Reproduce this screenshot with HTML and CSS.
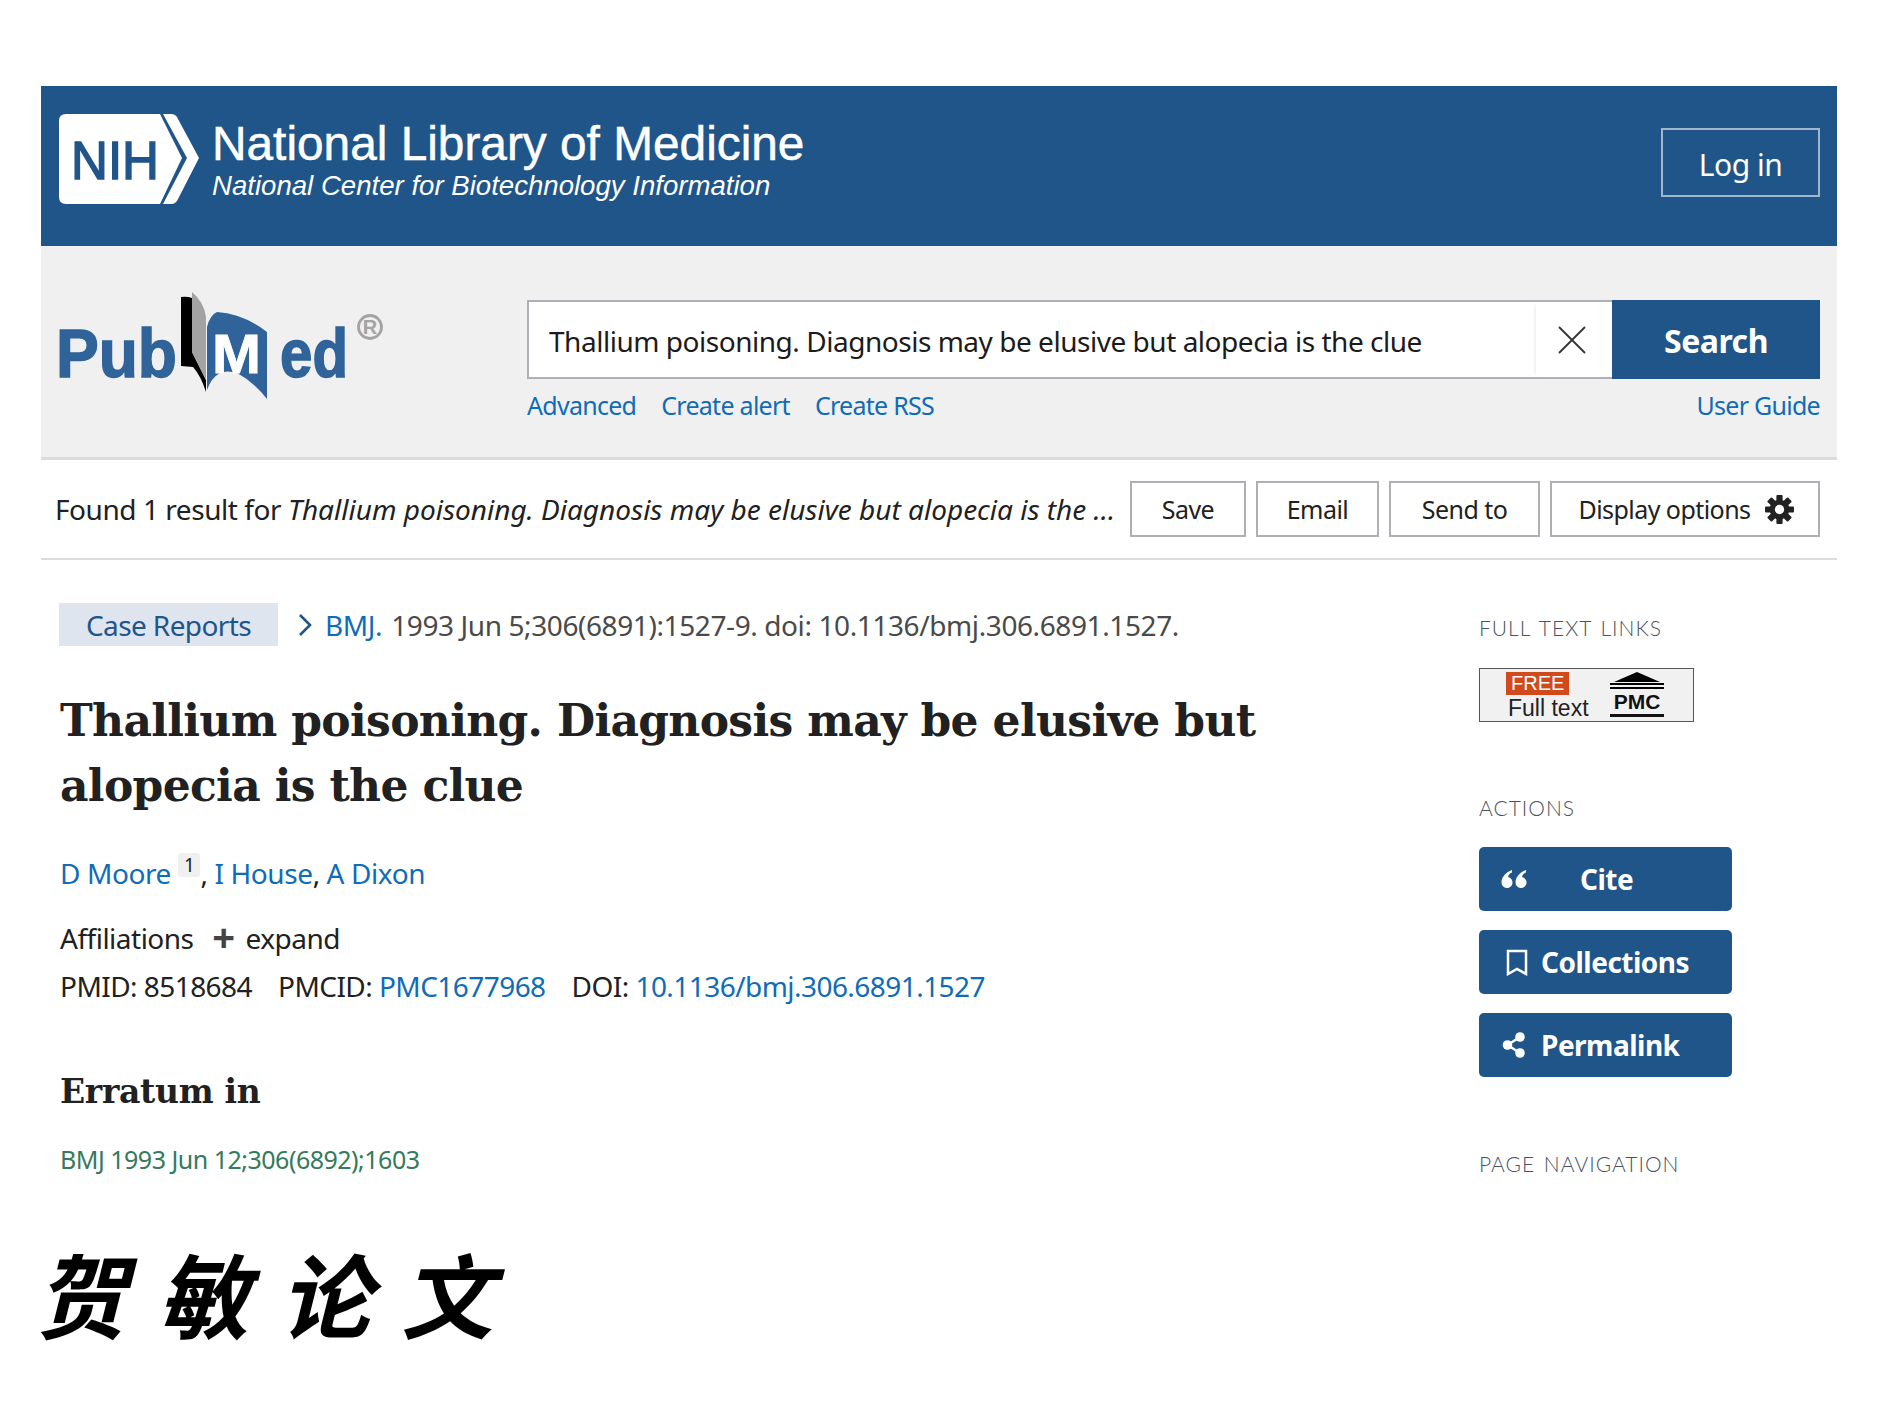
FILE: index.html
```html
<!DOCTYPE html>
<html lang="en">
<head>
  <meta charset="UTF-8" />
  <title>Thallium poisoning - PubMed</title>
  <link rel="stylesheet" href="styles.css">
</head>
<body>
  <div class="page">
    <header class="nih-bar">
      <div class="nih-brand">
        <svg class="nih-logo" width="140" height="90" viewBox="0 0 140 90">
          <path d="M7 0H101L123 44L101 90H7Q0 90 0 83V7Q0 0 7 0Z" fill="#fff"/>
          <path d="M104 0H112Q117 0 119 5L140 44L119 85Q117 90 112 90H104L128 44Z" fill="#fff"/>
          <text x="12" y="65" textLength="88" lengthAdjust="spacingAndGlyphs" class="nih-logo-text">NIH</text>
        </svg>
        <div class="nih-names">
          <div class="nih-title">National Library of Medicine</div>
          <div class="nih-sub">National Center for Biotechnology Information</div>
        </div>
      </div>
      <a class="login" href="#">Log in</a>
    </header>

    <section class="search-area">
      <svg class="pubmed-logo" width="330" height="112" viewBox="0 0 330 112">
        <path d="M148 37Q151 25 158 22Q185 24 208 42V109Q195 92 178 83Q168 80 161 83Q152 88 148 100Z" fill="#2f6399"/>
        <path d="M122 7Q128 6 133 8V62L147 90V102Q142 86 134 77L122 76Z" fill="#000"/>
        <path d="M133 2Q145 12 147 27V90L133 62Z" fill="#a3a3a3"/>
        <text x="-3" y="87" textLength="121" lengthAdjust="spacingAndGlyphs" class="pm-text">Pub</text>
        <text x="153" y="83" textLength="49" lengthAdjust="spacingAndGlyphs" class="pm-m">M</text>
        <text x="221" y="87" textLength="68" lengthAdjust="spacingAndGlyphs" class="pm-text">ed</text>
        <circle cx="311" cy="37" r="11.500" fill="none" stroke="#a3a3a3" stroke-width="2.800"/>
        <text x="311" y="44" class="pm-reg">R</text>
      </svg>
      <div class="search-col">
        <form class="search-form">
          <div class="search-input">
            <span class="search-text">Thallium poisoning. Diagnosis may be elusive but alopecia is the clue</span>
            <span class="clear-btn">
              <svg width="30" height="30" viewBox="0 0 30 30"><path d="M2 2L28 28M28 2L2 28" stroke="#333" stroke-width="1.800" fill="none"/></svg>
            </span>
          </div>
          <button class="search-btn" type="button">Search</button>
        </form>
        <div class="search-links">
          <a href="#">Advanced</a>
          <a href="#">Create alert</a>
          <a href="#">Create RSS</a>
          <a class="guide" href="#">User Guide</a>
        </div>
      </div>
    </section>

    <section class="results-bar">
      <div class="results-text">Found 1 result for <em>Thallium poisoning. Diagnosis may be elusive but alopecia is the ...</em></div>
      <div class="results-btns">
        <button class="bar-btn save" type="button">Save</button>
        <button class="bar-btn email" type="button">Email</button>
        <button class="bar-btn send" type="button">Send to</button>
        <button class="bar-btn display" type="button">Display options
          <svg width="29" height="29" viewBox="0 0 28 28">
            <g fill="#222">
              <rect x="11" y="0" width="6" height="28" rx="1"/>
              <rect x="11" y="0" width="6" height="28" rx="1" transform="rotate(45 14 14)"/>
              <rect x="11" y="0" width="6" height="28" rx="1" transform="rotate(90 14 14)"/>
              <rect x="11" y="0" width="6" height="28" rx="1" transform="rotate(135 14 14)"/>
              <circle cx="14" cy="14" r="9.500"/>
            </g>
            <circle cx="14" cy="14" r="4.500" fill="#fff"/>
          </svg>
        </button>
      </div>
    </section>

    <div class="content">
      <main class="article">
        <div class="meta-line">
          <span class="chip">Case Reports</span>
          <svg class="chev" width="16" height="24" viewBox="0 0 16 24"><path d="M3 2L13 12L3 22" fill="none" stroke="#20558a" stroke-width="2.600"/></svg>
          <a href="#">BMJ.</a>
          <span class="cit">1993 Jun 5;306(6891):1527-9. doi: 10.1136/bmj.306.6891.1527.</span>
        </div>
        <h1>Thallium poisoning. Diagnosis may be elusive but alopecia is the clue</h1>
        <div class="authors"><a href="#">D Moore</a><span class="aff-no">1</span>, <a href="#">I House</a>, <a href="#">A Dixon</a></div>
        <div class="affil">Affiliations <span class="plus">+</span> expand</div>
        <div class="ids">
          <span>PMID: 8518684</span>
          <span>PMCID: <a href="#">PMC1677968</a></span>
          <span>DOI: <a href="#">10.1136/bmj.306.6891.1527</a></span>
        </div>
        <h2>Erratum in</h2>
        <a class="erratum" href="#">BMJ 1993 Jun 12;306(6892);1603</a>
        <div class="brush">贺敏论文</div>
      </main>

      <aside class="side">
        <h3 class="side-head first">FULL TEXT LINKS</h3>
        <div class="badge">
          <div class="badge-left">
            <span class="free">FREE</span>
            <span class="fulltext">Full text</span>
          </div>
          <div class="badge-pmc">
            <svg width="54" height="17" viewBox="0 0 54 17"><path d="M27 0L50 10H4Z" fill="#000"/><rect y="11" width="54" height="2" fill="#000"/><rect y="15" width="54" height="2" fill="#000"/></svg>
            <span class="pmc">PMC</span>
            <span class="pmc-rule"></span>
          </div>
        </div>
        <h3 class="side-head">ACTIONS</h3>
        <a class="action" href="#">
          <svg class="quote" width="26" height="20" viewBox="0 0 26 20"><path d="M11 1C5 3 .5 8 .5 13.500A5.500 5.500 0 1 0 7 8.100C7.300 6 8.500 4.500 11 3.500Z" fill="#fff"/><path d="M25 1C19 3 14.500 8 14.500 13.500A5.500 5.500 0 1 0 21 8.100C21.300 6 22.500 4.500 25 3.500Z" fill="#fff"/></svg>
          <span class="cite-label">Cite</span>
        </a>
        <a class="action" href="#">
          <svg class="ico-book" width="22" height="27" viewBox="0 0 22 27"><path d="M2 2H20V25L11 20L2 25Z" fill="none" stroke="#fff" stroke-width="2.500"/></svg>
          Collections
        </a>
        <a class="action" href="#">
          <svg class="ico-share" width="24" height="26" viewBox="0 0 24 26"><circle cx="18" cy="5" r="4.800" fill="#fff"/><circle cx="5.500" cy="13" r="4.800" fill="#fff"/><circle cx="18" cy="21" r="4.800" fill="#fff"/><path d="M18 5L5.500 13L18 21" fill="none" stroke="#fff" stroke-width="2.500"/></svg>
          Permalink
        </a>
        <h3 class="side-head nav">PAGE NAVIGATION</h3>
      </aside>
    </div>
  </div>
</body>
</html>
```

FILE: styles.css
```css
:root {
  --azul: #20558a;
  --link: #0f6cb8;
  --texto: #212121;
  --borda: #aeb0b5;
}

body {
  margin: 0;
  background: #fff;
  color: var(--texto);
  font-family: "Noto Sans", "Open Sans", sans-serif;
  letter-spacing: -0.5px;
}

a {
  color: var(--link);
  text-decoration: none;
}

.page {
  margin: 0 53px 0 41px;
  padding-top: 86px;
}

/* barra NIH */
.nih-bar {
  height: 160px;
  box-sizing: border-box;
  padding: 28px 17px 0 18px;
  background: var(--azul);
  display: flex;
  justify-content: space-between;
  align-items: flex-start;
  color: #fff;
}

.nih-brand {
  display: flex;
  gap: 13px;
}

.nih-logo-text {
  font-family: "Liberation Sans", sans-serif;
  font-size: 54px;
  fill: var(--azul);
  stroke: var(--azul);
  stroke-width: 1.5px;
  letter-spacing: 0;
}

.nih-names {
  font-family: "Liberation Sans", sans-serif;
  letter-spacing: 0;
}

.nih-title {
  font-size: 47.8px;
  line-height: 50px;
  margin-top: 5px;
  -webkit-text-stroke: 0.5px #fff;
}

.nih-sub {
  font-size: 27.6px;
  font-style: italic;
  line-height: 32px;
  margin-top: 1px;
}

.login {
  width: 159px;
  height: 69px;
  margin-top: 14px;
  box-sizing: border-box;
  border: 2px solid #9fb6cd;
  color: #fff;
  font-size: 30px;
  padding-top: 3px;
  display: flex;
  align-items: center;
  justify-content: center;
}

/* busca */
.search-area {
  height: 214px;
  box-sizing: border-box;
  padding: 54px 17px 0 18px;
  background: #f0f0f0;
  border-bottom: 3px solid #dcdcdc;
  display: flex;
}

.pubmed-logo {
  margin: -10px 138px 0 0;
  flex: none;
  overflow: visible;
}

.pm-text {
  font-family: "Liberation Sans", sans-serif;
  font-weight: 700;
  font-size: 68px;
  fill: #2f6399;
  stroke: #2f6399;
  stroke-width: 1.5px;
  letter-spacing: 0;
}

.pm-m {
  font-family: "Liberation Sans", sans-serif;
  font-weight: 700;
  font-size: 56px;
  fill: #fff;
  stroke: #fff;
  stroke-width: 0.8px;
  letter-spacing: 0;
}

.pm-reg {
  font-family: "Liberation Sans", sans-serif;
  font-size: 20px;
  font-weight: 700;
  fill: #a3a3a3;
  text-anchor: middle;
  letter-spacing: 0;
}

.search-col {
  flex: 1;
}

.search-form {
  display: flex;
  height: 79px;
}

.search-input {
  flex: 1;
  box-sizing: border-box;
  border: 2px solid var(--borda);
  border-right: none;
  background: #fff;
  display: flex;
  align-items: center;
  justify-content: space-between;
  padding-left: 20px;
}

.search-text {
  font-size: 28px;
  letter-spacing: -0.47px;
  color: #1b1b1b;
  padding-top: 2px;
}

.clear-btn {
  width: 76px;
  height: 100%;
  box-sizing: border-box;
  padding-right: 5px;
  display: flex;
  align-items: center;
  justify-content: center;
  box-shadow: -3px 0 4px -3px #ddd;
}

.search-btn {
  width: 208px;
  padding-top: 2px;
  border: none;
  background: var(--azul);
  color: #fff;
  font-family: inherit;
  font-size: 32px;
  font-weight: 700;
  letter-spacing: -0.5px;
}

.search-links {
  display: flex;
  gap: 25px;
  font-size: 25px;
  letter-spacing: -0.72px;
  margin-top: 9px;
}

.guide {
  margin-left: auto;
}

/* barra de resultados */
.results-bar {
  height: 100px;
  box-sizing: border-box;
  padding: 21px 17px 0 14px;
  border-bottom: 2px solid #dcdcdc;
  display: flex;
  justify-content: space-between;
}

.results-text {
  font-size: 28px;
  line-height: 56px;
  letter-spacing: -0.45px;
  white-space: nowrap;
}

.results-text em {
  letter-spacing: 0;
}

.results-btns {
  display: flex;
  gap: 10px;
}

.bar-btn {
  height: 56px;
  box-sizing: border-box;
  border: 2px solid var(--borda);
  background: #fff;
  color: var(--texto);
  font-family: inherit;
  font-size: 25px;
  letter-spacing: -0.55px;
  display: flex;
  align-items: center;
  justify-content: center;
}

.save { width: 116px; }
.email { width: 123px; }
.send { width: 151px; }
.display { width: 270px; gap: 14px; padding-left: 8px; }

/* conteudo */
.content {
  display: flex;
  justify-content: space-between;
  padding: 43px 0 0 18px;
}

.article {
  width: 1240px;
}

.meta-line {
  display: flex;
  align-items: center;
  font-size: 28px;
  letter-spacing: -0.4px;
  height: 43px;
}

.chip {
  width: 219px;
  height: 43px;
  background: #dfe5ef;
  color: var(--azul);
  letter-spacing: -0.6px;
  display: flex;
  align-items: center;
  justify-content: center;
}

.chev {
  margin: 0 12px 0 19px;
}

.cit {
  color: #4a4a4a;
  margin-left: 9px;
}

h1 {
  font-family: "DejaVu Serif", serif;
  font-size: 44px;
  line-height: 65px;
  font-weight: 700;
  letter-spacing: -0.67px;
  margin: 42px 0 0 1px;
  width: 1220px;
}

.authors {
  font-size: 28px;
  line-height: 40px;
  letter-spacing: -0.4px;
  margin: 35px 0 0 1px;
}

.aff-no {
  display: inline-block;
  background: #f0f0f0;
  border-radius: 3px;
  font-size: 19px;
  line-height: 24px;
  padding: 0 6px;
  margin-left: 7px;
  vertical-align: 12px;
}

.affil {
  font-size: 28px;
  line-height: 40px;
  margin: 25px 0 0 1px;
}

.plus {
  font-size: 40px;
  font-weight: 700;
  line-height: 30px;
  color: #444;
  margin: 0 4px 0 12px;
  vertical-align: -3px;
}

.ids {
  font-size: 28px;
  line-height: 40px;
  letter-spacing: -0.55px;
  margin: 8px 0 0 1px;
  display: flex;
  gap: 26px;
}

h2 {
  font-family: "DejaVu Serif", serif;
  font-size: 33px;
  line-height: 44px;
  font-weight: 700;
  letter-spacing: -0.3px;
  margin: 64px 0 0 1px;
}

.erratum {
  display: block;
  color: #357a5c;
  font-size: 25px;
  line-height: 36px;
  margin: 27px 0 0 1px;
}

.brush {
  font-family: "Noto Sans CJK SC", sans-serif;
  font-size: 92px;
  font-weight: 700;
  font-style: italic;
  line-height: 110px;
  letter-spacing: 30px;
  color: #000;
  margin: 60px 0 0 -24px;
}

/* lateral */
.side {
  width: 344px;
  margin-right: 14px;
  padding-top: 10px;
}

.side-head {
  font-family: Lato, sans-serif;
  font-size: 21px;
  font-weight: 300;
  letter-spacing: 1px;
  word-spacing: 2px;
  line-height: 30px;
  color: #4b5361;
  margin: 71px 0 24px;
}

.side-head.first {
  margin-top: 0;
  margin-bottom: 25px;
}

.side-head.nav {
  margin-top: 72px;
}

.badge {
  width: 215px;
  height: 54px;
  box-sizing: border-box;
  border: 1px solid #555;
  background: #f1f1f1;
  display: flex;
  padding: 3px 0 0 26px;
  gap: 22px;
  letter-spacing: 0;
  font-family: "Liberation Sans", sans-serif;
}

.badge-left {
  width: 82px;
  display: flex;
  flex-direction: column;
  align-items: flex-start;
}

.free {
  background: #d04a1c;
  color: #fff;
  font-size: 20px;
  line-height: 23px;
  padding: 0 5px;
}

.fulltext {
  font-size: 23px;
  line-height: 25px;
  color: #222;
  margin: 1px 0 0 2px;
  white-space: nowrap;
}

.badge-pmc {
  display: flex;
  flex-direction: column;
  align-items: center;
  width: 54px;
}

.pmc {
  font-family: "Liberation Sans", sans-serif;
  font-size: 21px;
  font-weight: 700;
  line-height: 25px;
  color: #111;
}

.pmc-rule {
  width: 54px;
  height: 3px;
  background: #111;
}

.action {
  width: 253px;
  height: 64px;
  margin-bottom: 19px;
  border-radius: 5px;
  background: var(--azul);
  color: #fff;
  font-size: 28px;
  font-weight: 700;
  display: flex;
  align-items: center;
  padding-left: 22px;
  box-sizing: border-box;
}

.quote {
  margin-right: 53px;
}

.ico-book {
  margin: 0 13px 0 5px;
}

.ico-share {
  margin: 0 15px 0 1px;
}
```
